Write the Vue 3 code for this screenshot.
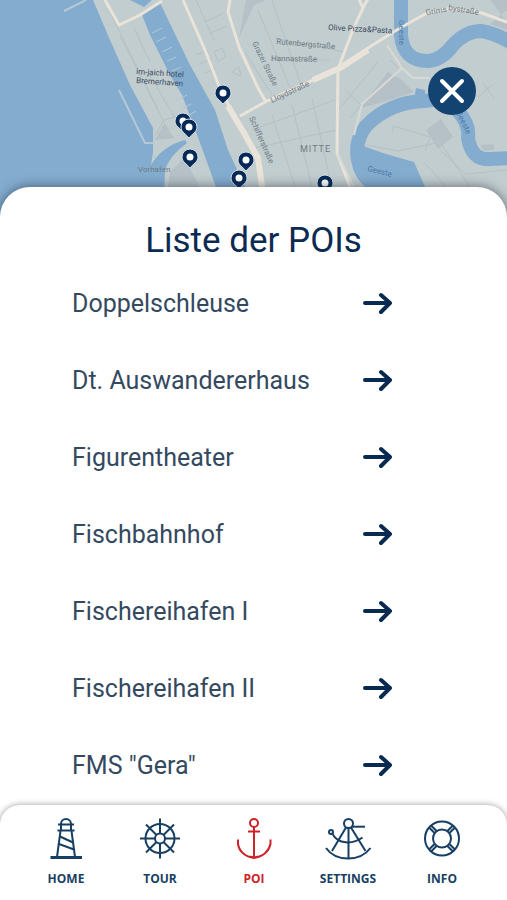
<script setup>
import { ref } from 'vue'

const pois = [
  'Doppelschleuse',
  'Dt. Auswandererhaus',
  'Figurentheater',
  'Fischbahnhof',
  'Fischereihafen I',
  'Fischereihafen II',
  'FMS "Gera"'
]

// Pin positions in map units
const pins = [
  { x: 223, y: 93 },
  { x: 183, y: 121 },
  { x: 189, y: 127 },
  { x: 190, y: 157 },
  { x: 246, y: 160 },
  { x: 239, y: 178 },
  { x: 325, y: 183 }
]

const tabs = [
  { id: 'home', label: 'HOME' },
  { id: 'tour', label: 'TOUR' },
  { id: 'poi', label: 'POI' },
  { id: 'settings', label: 'SETTINGS' },
  { id: 'info', label: 'INFO' }
]

const activeTab = ref('poi')
const selectedPoi = ref(null)
</script>

<template>
  <div class="app">
    <header class="map">
      <svg class="map-canvas" viewBox="0 0 507 230" preserveAspectRatio="xMidYMin slice" aria-hidden="true">
        <rect class="water" width="507" height="230" />
        <path class="land" d="M93 0 L110 40 L130 85 L153 128 L153 152 L151 165 Q162 146 185 140 L187 143 Q170 155 165 170 L163 230 H507 V0Z" />

        <!-- Harbour basin -->
        <path class="water" d="M142 15 L160 3 L190 65 L215 110 L228 150 L245 187 L262 230 H234 L216 187 L199 140 L182 95 L170 75 L150 35Z" />
        <path class="water" d="M130 0 H152 L144 7Z" />
        <path class="pier" d="M119 90 L145 143 H154 M64 11 L86 0" />
        <path class="pier thin" d="M152 33l10-5 M156 42l10-5 M162 52l10-5 M167 61l9-4 M172 71l9-4 M176 101l11-6 M180 110l11-6 M186 117l10-6" />

        <!-- Minor streets -->
        <path class="street" d="M108 8 L158 110 M120 36 L168 130 M134 28 L150 62 M150 75 L176 120 M196 0 L214 40 M204 22 L222 14 M209 34 L226 26 M196 55 L208 50 M200 64 L212 58 M205 73 L216 68 M214 52 l8-4 4 9 -8 4z M232 72 l7-5 2 9z M245 52 L272 95 M258 10 L290 88 M272 0 L300 82 M275 38 L345 52 M270 60 L330 60 M252 130 L335 100 M255 148 L336 130 M272 115 L295 187 M292 105 L312 187 M312 98 L330 180 M340 108 L378 62 M345 90 L362 106 M350 118 L366 100 M392 132 L394 126 L430 137 L425 151 M367 145 L398 151 L440 142 L470 187 M424 162 L446 187 M440 150 L466 174 L507 170 M390 60 L398 68 M478 97 L492 85 M483 83 L494 98 M155 136 L164 120 L178 116 M158 138 L170 128" />
        <path class="block" d="M490 0 L507 22 V0Z M490 24 L507 10 V30Z M426 130 L441 119 L453 137 L438 149Z M239 38 L254 5 L266 0 H246Z M360 108 L388 72 L402 80 L414 92 L380 103Z M155 140 L164 124 L174 138Z M170 172 L184 158 L200 187 H168Z M480 145 L494 144 V150 L484 151Z" />

        <!-- River and lake -->
        <path class="river" d="M401 -4 V35 Q403 61 428 61 Q442 60 453 45 Q466 31 481 31 Q495 33 512 43" />
        <path class="river" d="M452 97 L425 101 Q389 102 366 126 Q353 143 359 164 Q362 178 380 190" />
        <path class="river" d="M457 110 Q470 124 468 138 Q472 161 490 159 L512 158" />
        <path class="water" d="M363 146 L386 154 L414 162 L425 187 L440 230 H400 L365 180Z" />
        <path class="water" d="M416 88 L425 90 V101 H414Z" />

        <!-- Main roads -->
        <path class="road" d="M105 0 L119 25 L140 15 L162 1" />
        <path class="road" d="M183 0 L205 50 L219 86 L230 108" />
        <path class="road wide" d="M228 106 L244 133 L258 158 L264 200" />
        <path class="road" d="M230 0 L228 12 L239 47 L258 88 L266 102" />
        <path class="road" d="M240 116 L267 101 L335 70 L368 48 L395 31 L425 14 Q450 4 482 13 L512 24" />
        <path class="road wide" d="M313 80 L340 68 L368 50" />
        <path class="road" d="M358 -3 L363 8 L369 -3 M363 8 L354 27 L338 69 L337 153 L350 187" />
        <path class="road small" d="M387 45 L402 68 L413 78 H430 M402 68 L362 104 L354 135 M337 153 L375 230" />

        <g class="labels">
          <text class="dark" x="136" y="74" transform="rotate(4 136 74)">im-jaich hotel</text>
          <text class="dark" x="136" y="83" transform="rotate(4 136 83)">Bremerhaven</text>
          <text x="138" y="172">Vorhafen</text>
          <text class="dark" x="328" y="30" transform="rotate(3 328 30)">Olive Pizza&amp;Pasta</text>
          <text x="276" y="44" transform="rotate(5 276 44)">Rutenbergstraße</text>
          <text x="271" y="61" transform="rotate(1 271 61)">Hannastraße</text>
          <text x="272" y="103" transform="rotate(-25 272 103)">Lloydstraße</text>
          <text x="426" y="15" transform="rotate(-9 426 15)">Grims</text>
          <text x="448" y="10" transform="rotate(9 448 10)">bystraße</text>
          <text x="252" y="43" transform="rotate(64 252 43)">Grazer Straße</text>
          <text x="249" y="118" transform="rotate(66 249 118)">Schifferstraße</text>
          <text class="district" x="300" y="152">MITTE</text>
          <text class="river-name" x="367" y="171" transform="rotate(14 367 171)">Geeste</text>
          <text class="river-name" x="399" y="20" transform="rotate(90 399 20)">Geeste</text>
          <text class="river-name" x="456" y="112" transform="rotate(65 456 112)">Geeste</text>
        </g>

        <g v-for="(pin, index) in pins" :key="index" :transform="`translate(${pin.x} ${pin.y})`">
          <path class="pin" d="M0 11 C-3 7 -8 5 -8 0 A8 8 0 0 1 8 0 C8 5 3 7 0 11Z" />
          <circle class="pin-dot" r="3.500" />
        </g>
      </svg>

      <button class="btn-close" aria-label="Schließen">
        <svg viewBox="0 0 48 48" aria-hidden="true">
          <path d="M14 14 L34 34 M34 14 L14 34" />
        </svg>
      </button>
    </header>

    <main class="sheet">
      <h1>Liste der POIs</h1>
      <ul class="poi-list">
        <li v-for="poi in pois" :key="poi">
          <button class="poi-item" @click="selectedPoi = poi">
            <span>{{ poi }}</span>
            <svg class="arrow" viewBox="0 0 30 24" aria-hidden="true">
              <path d="M3 11 H27 M19 3 L28 11 L19 20" />
            </svg>
          </button>
        </li>
      </ul>
    </main>

    <nav class="tab-bar">
      <button
        v-for="tab in tabs"
        :key="tab.id"
        class="tab"
        :class="{ active: tab.id === activeTab }"
        @click="activeTab = tab.id"
      >
        <svg v-if="tab.id === 'home'" viewBox="0 0 48 44" aria-hidden="true">
          <path d="M19 7.500 V7 A5 5 0 0 1 29 7 V13 M19 7 V13" />
          <path d="M16 7.500 H32 M15.500 13.500 H32.500" />
          <path d="M18.500 14 L15 40 M29.500 14 L33 40" />
          <path d="M18 19.500 L31 25.500 M17 27 L32 32.500" />
          <path class="heavy" d="M8.500 40.500 H40" />
        </svg>
        <svg v-else-if="tab.id === 'tour'" viewBox="0 0 48 44" aria-hidden="true">
          <circle cx="24" cy="21.500" r="14.500" />
          <circle cx="24" cy="21.500" r="5" />
          <path d="M24 1.500 V16.500 M24 26.500 V41.500 M4 21.500 H19 M29 21.500 H44" />
          <path d="M10 7.500 L20.500 18 M27.500 25 L38 35.500 M38 7.500 L27.500 18 M20.500 25 L10 35.500" />
        </svg>
        <svg v-else-if="tab.id === 'poi'" viewBox="0 0 48 44" aria-hidden="true">
          <circle cx="24" cy="6" r="4" />
          <path d="M24 10 V40 M18 14.500 H30" />
          <path d="M8 22.500 V27 C9 34 15 40 24 40.500 C33 40 39 34 40.500 27 V22.500" />
          <path d="M20 39.500 L24 41 L28 39.500" />
        </svg>
        <svg v-else-if="tab.id === 'settings'" viewBox="0 0 48 44" aria-hidden="true">
          <circle cx="24.500" cy="6.500" r="4.500" />
          <circle cx="7" cy="15" r="2" />
          <path d="M27.500 9.700 H41" />
          <path d="M22 10.500 L8 34 M27 10.500 L41.500 34 M24.500 11 V41" />
          <path d="M8.500 17 C14 27 28 28 38.500 20.500" />
          <path d="M2 31 C12 45 36 45 46.500 31" />
        </svg>
        <svg v-else viewBox="0 0 48 44" aria-hidden="true">
          <circle cx="24" cy="21.500" r="17" />
          <circle cx="24" cy="21.500" r="9" />
          <path d="M11.300 10.800 L16.800 16.300 M13.300 8.800 L18.800 14.300 M36.700 10.800 L31.200 16.300 M34.700 8.800 L29.200 14.300 M11.300 32.200 L16.800 26.700 M13.300 34.200 L18.800 28.700 M36.700 32.200 L31.200 26.700 M34.700 34.200 L29.200 28.700" />
        </svg>
        <span>{{ tab.label }}</span>
      </button>
    </nav>
  </div>
</template>

<style>
body {
  margin: 0;
  background: #fff;
}
</style>

<style scoped>
.app {
  display: flex;
  flex-direction: column;
  min-height: 100vh;
  font-family: Roboto, 'Liberation Sans', sans-serif;
  color: #0f3156;
}

button {
  border: none;
  background: none;
  padding: 0;
  font: inherit;
  color: inherit;
  cursor: pointer;
}

.map {
  position: relative;
  height: 230px;
}

.map-canvas {
  display: block;
  width: 100%;
  height: 100%;
}

.water {
  fill: #84accf;
}

.land {
  fill: #c2cdcf;
}

.block {
  fill: #b5c1c6;
}

.pier,
.street,
.road,
.river {
  fill: none;
}

.pier {
  stroke: #b4c8d6;
  stroke-width: 2;
}

.pier.thin {
  stroke-width: 1;
}

.street {
  stroke: #b4c0c4;
  stroke-width: 1;
}

.river {
  stroke: #84accf;
  stroke-width: 14;
}

.road {
  stroke: #e9e3d9;
  stroke-width: 3;
}

.road.wide {
  stroke-width: 6;
}

.road.small {
  stroke: #d9dad6;
  stroke-width: 2;
}

.labels {
  font-size: 8px;
  fill: #6d7b84;
}

.labels .dark {
  fill: #3c4c60;
}

.labels .district {
  font-size: 9px;
  letter-spacing: 1px;
}

.labels .river-name {
  fill: #4c7ba8;
}

.pin {
  fill: #062a57;
  stroke: #d5e0e8;
  stroke-width: 1;
}

.pin-dot {
  fill: #fff;
}

.btn-close {
  position: absolute;
  top: 67px;
  right: 31px;
  width: 48px;
  height: 48px;
  border-radius: 50%;
  background: #134371;
}

.btn-close svg {
  display: block;
  fill: none;
  stroke: #fff;
  stroke-width: 4;
  stroke-linecap: round;
}

.sheet {
  position: relative;
  flex: 1;
  margin-top: -43px;
  padding-bottom: 18px;
  background: #fff;
  border-radius: 30px 30px 0 0;
  box-shadow: 0 0 12px rgba(20, 35, 50, 0.6);
}

h1 {
  margin: 0;
  padding-top: 30px;
  font-size: 35px;
  line-height: 48px;
  font-weight: 400;
  text-align: center;
  color: #0b2b52;
}

.poi-list {
  list-style: none;
  margin: 0;
  padding: 0 115px 0 72px;
}

.poi-item {
  display: flex;
  align-items: center;
  justify-content: space-between;
  width: 100%;
  height: 77px;
  font-size: 25px;
  line-height: 32px;
  text-align: left;
  color: #34495f;
}

.arrow {
  flex: none;
  width: 30px;
  height: 24px;
  fill: none;
  stroke: #082a50;
  stroke-width: 4;
  stroke-linecap: round;
  stroke-linejoin: round;
}

/* Overlaps the sheet so its rounded corners sit on white */
.tab-bar {
  position: sticky;
  bottom: 0;
  display: flex;
  height: 83px;
  margin-top: -20px;
  padding: 12px 18px 0 19px;
  background: #fff;
  border-radius: 20px 20px 0 0;
  box-shadow: 0 0 6px rgba(0, 0, 0, 0.4);
}

.tab {
  flex: 1 1 0;
  display: flex;
  flex-direction: column;
  align-items: center;
  gap: 10px;
  color: #173f63;
  font-family: 'Open Sans', 'Noto Sans', sans-serif;
  font-size: 12px;
  line-height: 16px;
  font-weight: 700;
}

.tab svg {
  width: 48px;
  height: 44px;
  fill: none;
  stroke: currentColor;
  stroke-width: 2;
}

.tab svg .heavy {
  stroke-width: 3;
}

.tab.active {
  color: #cc2229;
}
</style>
